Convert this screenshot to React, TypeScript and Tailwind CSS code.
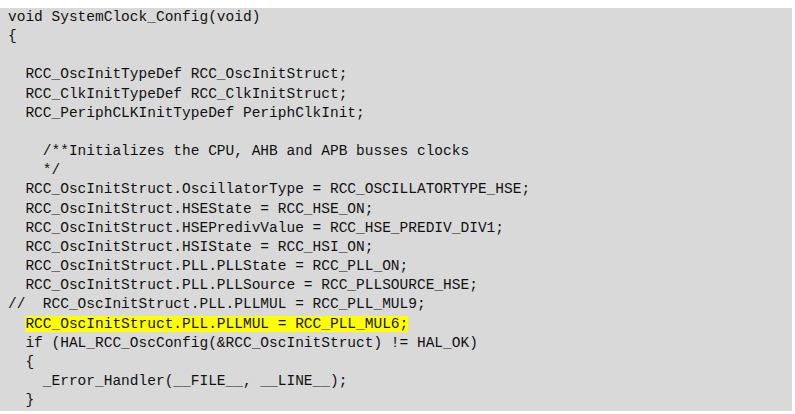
import React from 'react'

const lines: string[] = [
  'void SystemClock_Config(void)',
  '{',
  '',
  '  RCC_OscInitTypeDef RCC_OscInitStruct;',
  '  RCC_ClkInitTypeDef RCC_ClkInitStruct;',
  '  RCC_PeriphCLKInitTypeDef PeriphClkInit;',
  '',
  '    /**Initializes the CPU, AHB and APB busses clocks',
  '    */',
  '  RCC_OscInitStruct.OscillatorType = RCC_OSCILLATORTYPE_HSE;',
  '  RCC_OscInitStruct.HSEState = RCC_HSE_ON;',
  '  RCC_OscInitStruct.HSEPredivValue = RCC_HSE_PREDIV_DIV1;',
  '  RCC_OscInitStruct.HSIState = RCC_HSI_ON;',
  '  RCC_OscInitStruct.PLL.PLLState = RCC_PLL_ON;',
  '  RCC_OscInitStruct.PLL.PLLSource = RCC_PLLSOURCE_HSE;',
  '//  RCC_OscInitStruct.PLL.PLLMUL = RCC_PLL_MUL9;',
  'HIGHLIGHT',
  '  if (HAL_RCC_OscConfig(&RCC_OscInitStruct) != HAL_OK)',
  '  {',
  '    _Error_Handler(__FILE__, __LINE__);',
  '  }',
]

export default function App() {
  return (
    <div className="w-[795px] h-[414px] bg-white pt-[8px] overflow-hidden">
      {/* code block */}
      <pre className="w-[792px] h-[403px] bg-[#d9d9d9] pl-[8px] pt-0 text-[14.5px] leading-[19.15px] text-[#111] font-['Liberation_Mono','Courier_New',monospace] whitespace-pre">
        {lines.map((line, i) =>
          line === 'HIGHLIGHT' ? (
            <div key={i}>
              {'  '}
              <span className="bg-[#ffff00]">RCC_OscInitStruct.PLL.PLLMUL = RCC_PLL_MUL6;</span>
            </div>
          ) : (
            <div key={i}>{line || ' '}</div>
          )
        )}
      </pre>
    </div>
  )
}
